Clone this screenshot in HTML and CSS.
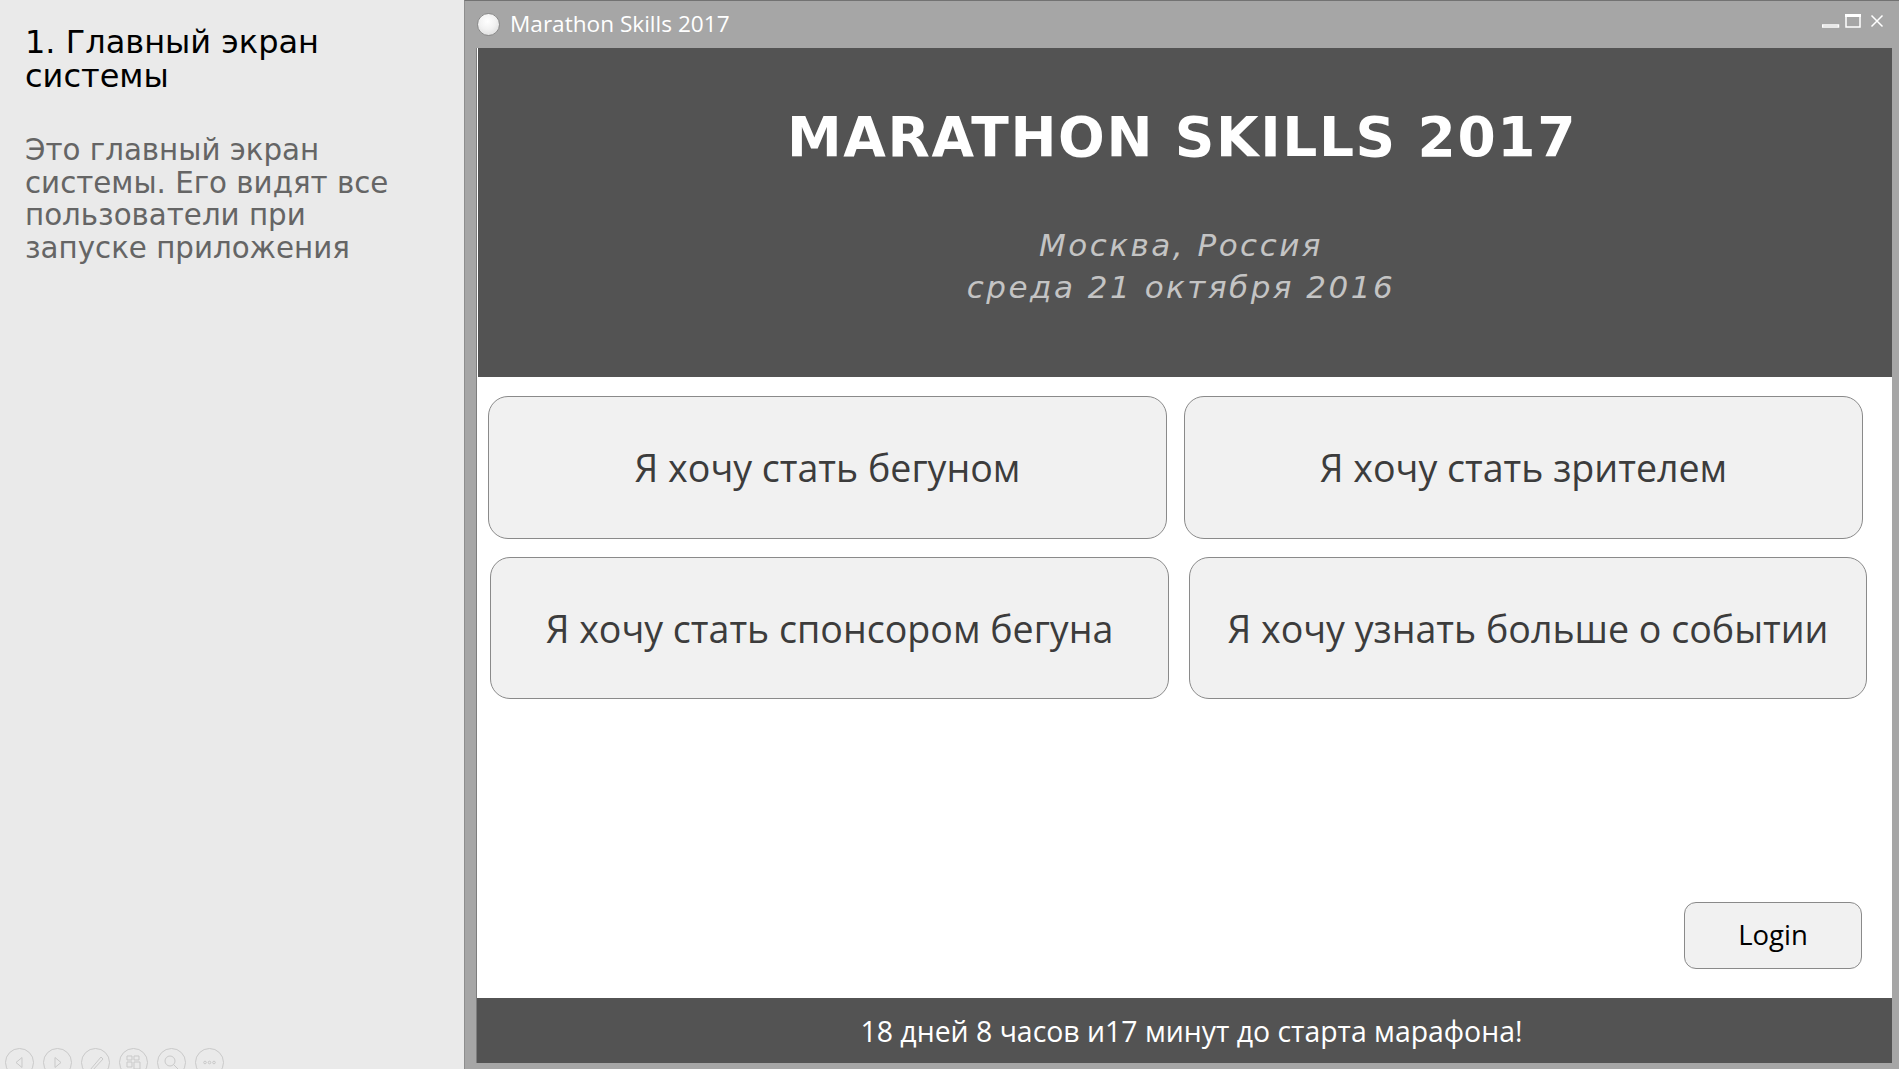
FILE: index.html
```html
<!DOCTYPE html>
<html lang="ru">
<head>
<meta charset="utf-8">
<title>Marathon Skills 2017</title>
<link rel="stylesheet" href="styles.css">
</head>
<body>
<div class="screen">
  <aside class="notes">
    <h1 class="notes-title"><span class="line">1. Главный экран</span><span class="line">системы</span></h1>
    <p class="notes-text">Это главный экран<br>системы. Его видят все<br>пользователи при<br>запуске приложения</p>
    <div class="player">
      <span class="pbtn"><svg viewBox="0 0 29 29"><circle cx="14.5" cy="14.5" r="14" /><path d="M17 9.5 L11 14.5 L17 19.5 Z" /></svg></span>
      <span class="pbtn"><svg viewBox="0 0 29 29"><circle cx="14.5" cy="14.5" r="14" /><path d="M12 9.5 L18 14.5 L12 19.5 Z" /></svg></span>
      <span class="pbtn"><svg viewBox="0 0 29 29"><circle cx="14.5" cy="14.5" r="14" /><path d="M9 22 L20 9 L22 11 L11 23 Z M9 22 L8 25" /></svg></span>
      <span class="pbtn"><svg viewBox="0 0 29 29"><circle cx="14.5" cy="14.5" r="14" /><path d="M8 8 H13 V12 H8 Z M15 8 H20 V12 H15 Z M8 14 H13 V19 H8 Z M15 14 H21 V21 H15 Z" /></svg></span>
      <span class="pbtn"><svg viewBox="0 0 29 29"><circle cx="14.5" cy="14.5" r="14" /><circle cx="13" cy="13" r="5" /><path d="M16.5 16.5 L21 21" /></svg></span>
      <span class="pbtn"><svg viewBox="0 0 29 29"><circle cx="14.5" cy="14.5" r="14" /><circle cx="10" cy="14.5" r="1.3" /><circle cx="14.5" cy="14.5" r="1.3" /><circle cx="19" cy="14.5" r="1.3" /></svg></span>
    </div>
  </aside>

  <section class="window">
    <div class="titlebar">
      <span class="app-icon"></span>
      <span class="win-title">Marathon Skills 2017</span>
      <svg class="win-controls" viewBox="0 0 62 14" width="62" height="14">
        <rect x="0.5" y="11" width="16" height="2" />
        <rect x="24" y="1" width="14" height="12" />
        <rect x="23" y="0" width="16" height="3" class="solid" />
        <path d="M49.5 1.5 L60.5 12.5 M60.5 1.5 L49.5 12.5" />
      </svg>
    </div>

    <div class="content">
      <header class="hero">
        <h1 class="hero-title">MARATHON SKILLS 2017</h1>
        <p class="hero-sub">Москва, Россия<br>среда 21 октября 2016</p>
      </header>

      <div class="actions">
        <div class="row row-top">
          <button class="action">Я хочу стать бегуном</button>
          <button class="action">Я хочу стать зрителем</button>
        </div>
        <div class="row row-bottom">
          <button class="action">Я хочу стать спонсором бегуна</button>
          <button class="action action-wide">Я хочу узнать больше о событии</button>
        </div>
      </div>

      <div class="login-row">
        <button class="login">Login</button>
      </div>

      <footer class="countdown">18 дней 8 часов и17 минут до старта марафона!</footer>
    </div>
  </section>
</div>
</body>
</html>
```

FILE: styles.css
```css
* {
  box-sizing: border-box;
}

html, body {
  margin: 0;
  padding: 0;
}

body {
  background: #eaeaea;
  font-family: "DejaVu Sans", sans-serif;
}

.screen {
  display: flex;
  width: 1899px;
  height: 1069px;
  overflow: hidden;
}

/* ---------- left notes panel ---------- */
.notes {
  width: 464px;
  flex: none;
  background: #eaeaea;
  display: flex;
  flex-direction: column;
  padding: 25px 0 0 25px;
  overflow: hidden;
}

.notes-title {
  margin: 0;
  font-family: "DejaVu Sans", sans-serif;
  font-weight: normal;
  font-size: 32px;
  line-height: 34px;
  color: #000;
  display: flex;
  flex-direction: column;
}

.notes-title .line {
  display: block;
  height: 34px;
}

.notes-text {
  margin: 41px 0 0;
  font-family: "DejaVu Sans", sans-serif;
  font-size: 29.3px;
  line-height: 32.7px;
  color: #656565;
}

.player {
  margin-top: auto;
  margin-left: -20px;
  margin-bottom: -8px;
  display: flex;
  gap: 9px;
}

.pbtn {
  width: 29px;
  height: 29px;
  display: block;
}

.pbtn svg {
  width: 29px;
  height: 29px;
  display: block;
  fill: none;
  stroke: #c9c9c9;
  stroke-width: 1;
}

/* ---------- window ---------- */
.window {
  flex: 1;
  display: flex;
  flex-direction: column;
  background: #a6a6a6;
  border-top: 1px solid #727272;
  border-left: 1px solid #8e8e8e;
}

.titlebar {
  height: 47px;
  flex: none;
  display: flex;
  align-items: center;
  padding-left: 12px;
  padding-right: 15px;
}

.app-icon {
  width: 23px;
  height: 23px;
  border-radius: 50%;
  background: radial-gradient(circle at 45% 35%, #ffffff 0%, #f2f2f2 45%, #d4d4d4 100%);
  border: 1px solid #8a8a8a;
  flex: none;
}

.win-title {
  margin-left: 10px;
  font-family: "Open Sans", sans-serif;
  font-size: 22.6px;
  color: #ffffff;
  line-height: 1;
  margin-top: -1px;
}

.win-controls {
  margin-left: auto;
  align-self: flex-start;
  margin-top: 13px;
  fill: none;
  stroke: #ffffff;
  stroke-width: 1.5;
}

.win-controls .solid {
  fill: #ffffff;
  stroke: none;
}

.content {
  flex: 1;
  margin: 0 7px 6px 11px;
  background: #ffffff;
  border-left: 1px solid #7d7d7d;
  display: flex;
  flex-direction: column;
}

.hero {
  height: 329px;
  flex: none;
  margin-left: 1px;
  background: #535353;
  text-align: center;
  padding-top: 62px;
}

.hero-title {
  margin: 0;
  font-family: "DejaVu Sans", sans-serif;
  font-weight: bold;
  font-size: 55px;
  line-height: 55px;
  letter-spacing: 1.6px;
  color: #ffffff;
  margin-left: -6px;
}

.hero-sub {
  margin: 59px 0 0;
  font-family: "DejaVu Sans", sans-serif;
  font-style: italic;
  font-size: 31px;
  line-height: 42px;
  letter-spacing: 2.5px;
  color: #c4c4c4;
  margin-left: -8px;
}

.actions {
  padding-top: 19px;
  display: flex;
  flex-direction: column;
  gap: 18px;
}

.row {
  display: flex;
}

.row-top {
  padding-left: 11px;
  gap: 17px;
  height: 143px;
}

.row-bottom {
  padding-left: 13px;
  gap: 20px;
  height: 142px;
}

.action {
  width: 679px;
  height: 100%;
  border: 1px solid #8a8a8a;
  border-radius: 20px;
  background: #f1f1f1;
  font-family: "Open Sans", sans-serif;
  font-size: 37.6px;
  color: #3c3c3c;
  padding: 0;
  margin: 0;
}

.action-wide {
  width: 678px;
}

.login-row {
  margin-top: auto;
  display: flex;
  justify-content: flex-end;
  padding-right: 30px;
  margin-bottom: 29px;
}

.login {
  width: 178px;
  height: 67px;
  border: 1px solid #8a8a8a;
  border-radius: 12px;
  background: #f1f1f1;
  font-family: "Open Sans", sans-serif;
  font-size: 27.5px;
  color: #000;
  padding: 0 0 3px;
}

.countdown {
  height: 65px;
  flex: none;
  background: #535353;
  color: #ffffff;
  font-family: "Open Sans", sans-serif;
  font-size: 28.4px;
  display: flex;
  align-items: center;
  justify-content: center;
  padding-left: 14px;
}
```
